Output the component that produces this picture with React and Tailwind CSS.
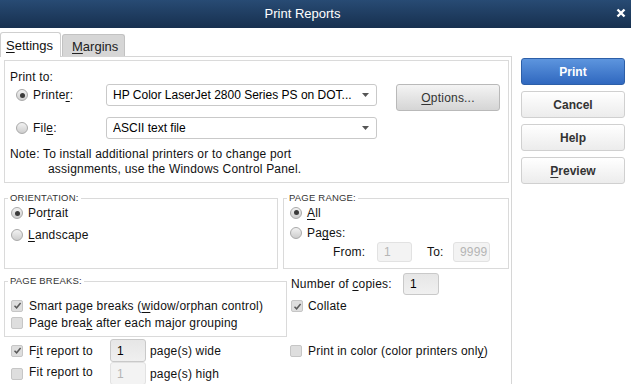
const FONT = { fontFamily: '"Liberation Sans", Arial, sans-serif' }

function U({ children }) {
  return <span className="underline underline-offset-[2px]">{children}</span>
}

function Radio({ checked }) {
  return (
    <span className="w-[12px] h-[12px] rounded-full border border-[#a9a9a9] bg-linear-to-b from-[#f2f2f2] to-[#cdcdcd] flex items-center justify-center shrink-0">
      {checked && <span className="w-[5px] h-[5px] rounded-full bg-[#3a3a3a]" />}
    </span>
  )
}

function Check({ checked }) {
  return (
    <span className="w-[12px] h-[12px] rounded-[2px] border border-[#c6c6c6] bg-[#dedede] flex items-center justify-center shrink-0">
      {checked && (
        <svg width="9" height="9" viewBox="0 0 9 9">
          <path d="M1.5 4.8 L3.6 6.8 L7.6 2" fill="none" stroke="#5a5a5a" strokeWidth="1.5" />
        </svg>
      )}
    </span>
  )
}

function Select({ value }) {
  return (
    <div className="w-[271px] h-[22px] rounded-[3px] border border-[#c9c9c9] bg-white flex items-center pl-[6px] pr-[7px] text-[12px] text-black tracking-normal">
      <span className="flex-1 whitespace-nowrap overflow-hidden">{value}</span>
      <svg className="ml-[6px] shrink-0" width="7" height="4" viewBox="0 0 7 4">
        <path d="M0 0 L7 0 L3.5 4 Z" fill="#555" />
      </svg>
    </div>
  )
}

function Field({ value, w, disabled }) {
  return (
    <div
      className={`h-full rounded-[3px] border flex items-center pl-[6px] text-[12px] ${w} ${
        disabled ? 'border-[#e2e2e2] bg-[#f3f3f3] text-[#b5b5b5]' : 'border-[#c9c9c9] bg-linear-to-b from-[#e6e6e6] to-[#f0f0f0] text-black'
      }`}
    >
      {value}
    </div>
  )
}

function SideButton({ children, primary }) {
  return (
    <div
      className={`w-[104px] h-[27px] rounded-[3px] border flex items-center justify-center text-[12px] font-bold ${
        primary
          ? 'border-[#2d5fa8] bg-linear-to-b from-[#5d95de] to-[#3068bf] text-white'
          : 'border-[#d0d0d0] bg-linear-to-b from-[#ffffff] to-[#ececec] text-[#333]'
      }`}
    >
      {children}
    </div>
  )
}

function Legend({ children }) {
  return (
    <legend className="-ml-[3px] px-[2px] text-[9.5px] leading-[12px] text-[#333]">{children}</legend>
  )
}

export default function App() {
  return (
    <div className="w-[631px] h-[384px] overflow-hidden bg-white flex flex-col text-[#111]" style={FONT}>
      {/* Title bar */}
      <div className="h-[28px] shrink-0 relative flex items-center justify-center pr-[26px] bg-linear-to-b from-[#284b74] to-[#17304f] text-white text-[13px]">
        Print Reports
        <svg className="absolute right-[5px] top-[8px]" width="10" height="10" viewBox="0 0 10 10">
          <path d="M1.5 1.5 L8.5 8.5 M8.5 1.5 L1.5 8.5" stroke="#fff" strokeWidth="2.4" />
        </svg>
      </div>

      <div className="flex flex-1 min-h-0">
        {/* Left side */}
        <div className="w-[512px] shrink-0 flex flex-col">
          {/* Tabs */}
          <div className="h-[28px] shrink-0 flex items-end relative z-10">
            <div className="w-[61px] h-[25px] mb-[-1px] border border-b-0 border-[#cfcfcf] rounded-t-[3px] bg-white text-[13px] pl-[5px] pt-[3px]">
              <U>S</U>ettings
            </div>
            <div className="w-[63px] h-[22px] ml-[1px] border border-b-0 border-[#c2c2c2] rounded-t-[3px] bg-[#d6d6d6] text-[13px] pl-[9px] pt-[2px] text-[#222]">
              <U>M</U>argins
            </div>
          </div>

          {/* Settings panel */}
          <div className="flex-1 border-t border-r border-[#d6d6d6] pl-[4px] pt-[3px] flex flex-col tracking-[0.2px]">
            {/* Print to */}
            <div className="w-[505px] h-[123px] border border-[#dadada] pl-[5px] flex flex-col text-[12px]">
              <div className="mt-[9px] h-[14px] leading-[14px]">Print to:</div>
              <div className="flex items-start h-[27px]">
                <div className="w-[96px] h-[22px] flex items-center pl-[6px] gap-[5px]">
                  <Radio checked />
                  <span>
                    Printe<U>r</U>:
                  </span>
                </div>
                <Select value="HP Color LaserJet 2800 Series PS on DOT..." />
                <div className="ml-[19px] w-[104px] h-[27px] rounded-[3px] border border-[#b9b9b9] bg-linear-to-b from-[#f4f4f4] to-[#d5d5d5] flex items-center justify-center text-[12px] text-[#333]">
                  <U>O</U>ptions...
                </div>
              </div>
              <div className="flex items-center h-[22px] mt-[6px]">
                <div className="w-[96px] h-[22px] flex items-center pl-[6px] gap-[5px]">
                  <Radio />
                  <span>
                    Fil<U>e</U>:
                  </span>
                </div>
                <Select value="ASCII text file" />
              </div>
              <div className="mt-[8px] leading-[15px]">
                <div>Note: To install additional printers or to change port</div>
                <div className="pl-[38px]">assignments, use the Windows Control Panel.</div>
              </div>
            </div>

            {/* Orientation + page range */}
            <div className="flex mt-[9px] text-[12px]">
              <fieldset className="w-[274px] h-[77px] border border-[#dadada] pl-[6px]">
                <Legend>ORIENTATION:</Legend>
                <div className="flex flex-col gap-[4px]">
                  <div className="h-[18px] flex items-center gap-[5px]">
                    <Radio checked />
                    <span>
                      Por<U>t</U>rait
                    </span>
                  </div>
                  <div className="h-[18px] flex items-center gap-[5px]">
                    <Radio />
                    <span>
                      <U>L</U>andscape
                    </span>
                  </div>
                </div>
              </fieldset>
              <fieldset className="ml-[5px] w-[226px] h-[77px] border border-[#dadada] pl-[6px]">
                <Legend>PAGE RANGE:</Legend>
                <div className="flex flex-col">
                  <div className="h-[17px] flex items-center gap-[5px]">
                    <Radio checked />
                    <span>
                      <U>A</U>ll
                    </span>
                  </div>
                  <div className="h-[18px] mt-[3px] flex items-center gap-[5px]">
                    <Radio />
                    <span>
                      Pa<U>g</U>es:
                    </span>
                  </div>
                  <div className="h-[20px] flex items-center pl-[43px]">
                    <span className="w-[44px]">From:</span>
                    <Field value="1" w="w-[35px]" disabled />
                    <span className="ml-[15px] w-[26px]">To:</span>
                    <Field value="9999" w="w-[37px]" disabled />
                  </div>
                </div>
              </fieldset>
            </div>

            {/* Page breaks + copies */}
            <div className="flex items-start mt-[4px] text-[12px]">
              <fieldset className="mt-[2px] w-[283px] h-[62px] border border-[#dadada] pl-[6px]">
                <Legend>PAGE BREAKS:</Legend>
                <div className="pt-[10px] flex flex-col">
                  <div className="h-[17px] flex items-center gap-[6px]">
                    <Check checked />
                    <span>
                      Smart page breaks (<U>w</U>idow/orphan control)
                    </span>
                  </div>
                  <div className="h-[17px] flex items-center gap-[6px]">
                    <Check />
                    <span>
                      Page brea<U>k</U> after each major grouping
                    </span>
                  </div>
                </div>
              </fieldset>
              <div className="pl-[4px] flex flex-col">
                <div className="h-[22px] flex items-center">
                  <span className="w-[112px]">
                    Number of <U>c</U>opies:
                  </span>
                  <Field value="1" w="w-[36px]" />
                </div>
                <div className="h-[18px] mt-[2px] flex items-center gap-[5px]">
                  <Check checked />
                  <span>Collate</span>
                </div>
              </div>
            </div>

            {/* Fit report + color */}
            <div className="flex mt-[2px] text-[12px]">
              <div className="w-[286px] flex flex-col">
                <div className="h-[23px] flex items-center pl-[7px]">
                  <Check checked />
                  <span className="ml-[6px] w-[81px]">
                    F<U>i</U>t report to
                  </span>
                  <Field value="1" w="w-[36px]" />
                  <span className="ml-[4px]">page(s) wide</span>
                </div>
                <div className="h-[23px] flex items-center pl-[7px]">
                  <Check />
                  <span className="ml-[6px] w-[81px] -mt-[3px]">Fit report to</span>
                  <Field value="1" w="w-[36px]" disabled />
                  <span className="ml-[4px]">page(s) high</span>
                </div>
              </div>
              <div className="h-[23px] flex items-center gap-[6px]">
                <Check />
                <span>
                  Print in color (color printers onl<U>y</U>)
                </span>
              </div>
            </div>
          </div>
        </div>

        {/* Right buttons */}
        <div className="flex flex-col gap-[6px] pl-[9px] pt-[30px]">
          <SideButton primary>Print</SideButton>
          <SideButton>Cancel</SideButton>
          <SideButton>Help</SideButton>
          <SideButton>
            <U>P</U>review
          </SideButton>
        </div>
      </div>
    </div>
  )
}
